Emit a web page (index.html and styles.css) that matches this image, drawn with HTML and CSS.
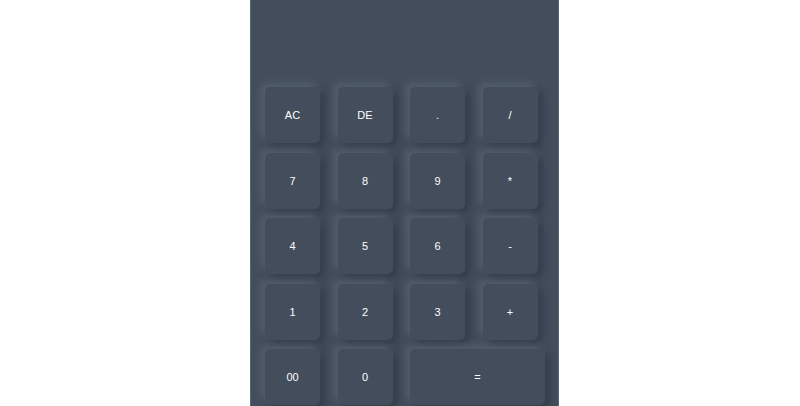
FILE: index.html
```html
<!DOCTYPE html>
<html>
<head>
<meta charset="utf-8">
<link rel="stylesheet" href="styles.css">
</head>
<body>
<div class="calc">
  <div class="display"></div>
  <div class="keys">
    <button class="key">AC</button>
    <button class="key">DE</button>
    <button class="key">.</button>
    <button class="key">/</button>
    <button class="key">7</button>
    <button class="key">8</button>
    <button class="key">9</button>
    <button class="key">*</button>
    <button class="key">4</button>
    <button class="key">5</button>
    <button class="key">6</button>
    <button class="key">-</button>
    <button class="key">1</button>
    <button class="key">2</button>
    <button class="key">3</button>
    <button class="key">+</button>
    <button class="key">00</button>
    <button class="key">0</button>
    <button class="key wide">=</button>
  </div>
</div>
</body>
</html>
```
FILE: styles.css
```css
html, body {
  margin: 0;
  padding: 0;
  background: #ffffff;
  height: 100%;
  overflow: hidden;
}
body {
  font-family: "Liberation Sans", Arial, sans-serif;
}
.calc {
  margin-left: 250px;
  width: 307px;
  height: 100vh;
  overflow: hidden;
  background: #434d5c;
  border-left: 1px solid #5a6574;
  border-right: 1px solid #5a6574;
}
.display {
  height: 87px;
}
.keys {
  display: flex;
  flex-wrap: wrap;
  column-gap: 17.5px;
  row-gap: 9.5px;
  padding-left: 14px;
}
.key {
  width: 55px;
  height: 56px;
  border: none;
  border-radius: 5px;
  background: #434d5c;
  color: #ffffff;
  font-family: "Liberation Sans", Arial, sans-serif;
  font-size: 11px;
  padding: 0;
  box-shadow: -4px -4px 9px rgba(120, 134, 152, 0.35), 4px 4px 9px rgba(30, 36, 45, 0.45);
}
.wide {
  width: 135px;
}
```
